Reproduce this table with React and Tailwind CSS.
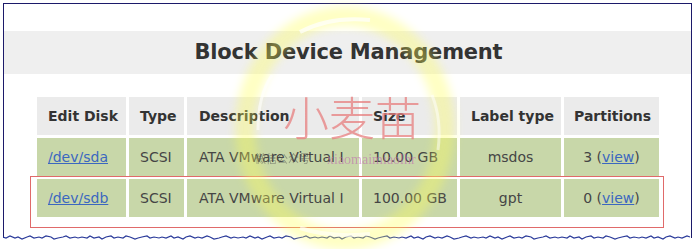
import React from "react";

const torn = (() => {
  const pts = [];
  let x = 0;
  const ys = [2, 3, 1, 3, 2, 4, 2, 1, 3, 2, 3, 1, 2, 4, 3, 2, 1, 3, 2, 3];
  let i = 0;
  while (x <= 690) {
    pts.push(`${x},${ys[i % ys.length]}`);
    x += 3 + ((i * 7) % 3);
    i++;
  }
  return pts.join(" ");
})();

const rows = [
  { disk: "/dev/sda", type: "SCSI", desc: "ATA VMware Virtual I", size: "10.00 GB", label: "msdos", parts: "3" },
  { disk: "/dev/sdb", type: "SCSI", desc: "ATA VMware Virtual I", size: "100.00 GB", label: "gpt", parts: "0" },
];

export default function App() {
  return (
    <div
      className="relative w-[699px] h-[249px] bg-white overflow-hidden"
      style={{ fontFamily: '"DejaVu Sans", Verdana, sans-serif' }}
    >
      <div className="ml-[3px] mt-[3px] w-[689px] h-[235px] border-l border-t border-r border-[#1c1a6a]">
        <div className="mt-[27px] h-[43px] bg-[#efefef] flex items-center justify-center">
          <h1 className="text-[21px] font-bold text-[#333333] tracking-[-0.2px] pl-[2px]">Block Device Management</h1>
        </div>
        <table className="mt-[20px] ml-[30px] table-fixed w-[628px] border-separate border-spacing-[3px] text-[14px]">
          <thead>
            <tr className="h-[38px] bg-[#ebebeb] text-[#333333] font-bold text-left whitespace-nowrap">
              <th className="w-[89px] px-[11px]">Edit Disk</th>
              <th className="w-[55px] px-[11px]">Type</th>
              <th className="w-[172px] px-[12px]">Description</th>
              <th className="w-[95px] px-[11px]">Size</th>
              <th className="w-[101px] px-[11px]">Label type</th>
              <th className="w-[95px] px-[10px]">Partitions</th>
            </tr>
          </thead>
          <tbody>
            {rows.map((r) => (
              <tr key={r.disk} className="h-[38px] bg-[#c8d7a9] text-[#454545] whitespace-nowrap">
                <td className="px-[11px]">
                  <a href="#" className="text-[#3b67c0] underline">{r.disk}</a>
                </td>
                <td className="px-[11px]">{r.type}</td>
                <td className="px-[12px]">{r.desc}</td>
                <td className="px-[11px]">{r.size}</td>
                <td className="text-center">{r.label}</td>
                <td className="text-center">
                  {r.parts} (<a href="#" className="text-[#3b67c0] underline">view</a>)
                </td>
              </tr>
            ))}
          </tbody>
        </table>
      </div>

      <svg className="absolute left-[3px] top-[235px]" width="690" height="6">
        <polyline points={torn} fill="none" stroke="#2a3a9a" strokeWidth="1.2" />
      </svg>

      {/* red highlight box */}
      <div className="absolute left-[30px] top-[176px] w-[634px] h-[52px] border-[1.5px] border-[#e06a6a]" />

      {/* watermark ring */}
      <svg className="absolute left-0 top-0 pointer-events-none" width="699" height="249">
        <defs>
          <filter id="blur" x="-20%" y="-20%" width="140%" height="140%">
            <feGaussianBlur stdDeviation="5" />
          </filter>
        </defs>
        <ellipse cx="345" cy="128" rx="100" ry="112" fill="none" stroke="#ffff55" strokeWidth="20" opacity="0.35" filter="url(#blur)" />
        <path d="M300 32 Q330 16 370 20" stroke="#ffffff" strokeWidth="4" fill="none" opacity="0.7" />
        <path d="M258 130 Q258 95 272 75" stroke="#ffffff" strokeWidth="3" fill="none" opacity="0.6" />
        <path d="M432 95 Q442 120 438 150" stroke="#ffffff" strokeWidth="3" fill="none" opacity="0.5" />
        <path d="M300 228 Q330 238 370 234" stroke="#ffffff" strokeWidth="4" fill="none" opacity="0.6" />
      </svg>

      <div
        className="absolute left-[283px] top-[92px] text-[46px] leading-none text-[#e88080] opacity-75 pointer-events-none"
        style={{ fontFamily: '"Noto Sans CJK SC", sans-serif', fontWeight: 300 }}
      >
        小麦苗
      </div>
      <div
        className="absolute left-[255px] top-[150px] text-[11px] text-[#555555] opacity-50 pointer-events-none"
        style={{ fontFamily: '"Noto Sans CJK SC", sans-serif' }}
      >
        微信公众号
      </div>
      <div
        className="absolute left-[327px] top-[149px] text-[14px] text-[#c070b0] opacity-60 pointer-events-none"
        style={{ fontFamily: '"Liberation Serif", serif' }}
      >
        xiaomaimiaolhr
      </div>
    </div>
  );
}
